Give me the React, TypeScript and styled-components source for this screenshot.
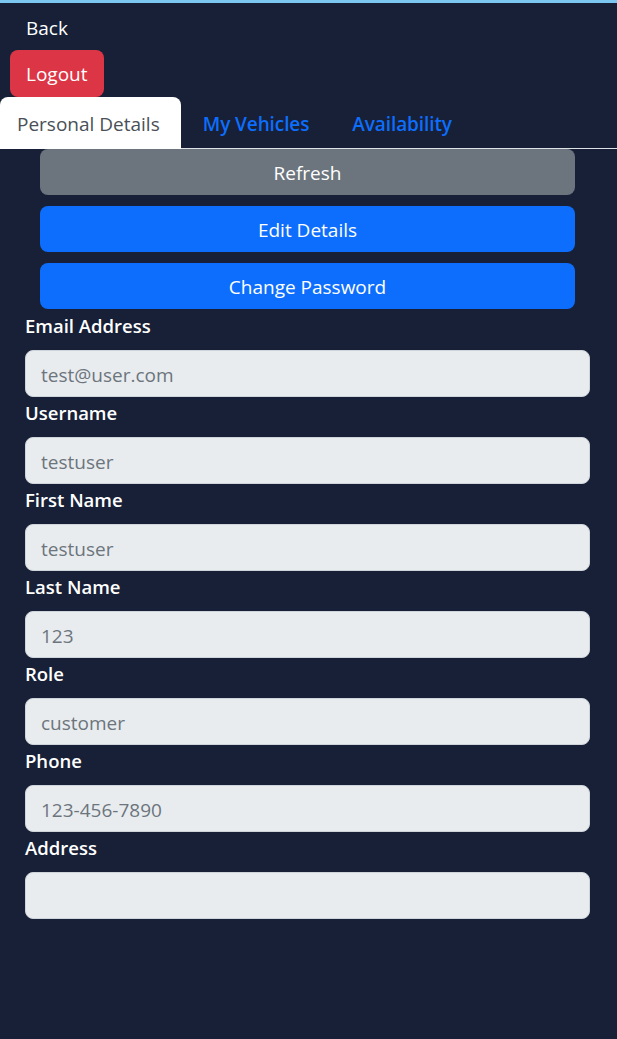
import React from 'react';
import styled, { createGlobalStyle } from 'styled-components';

const GlobalStyle = createGlobalStyle`
  * { box-sizing: border-box; }
  html, body {
    margin: 0;
    padding: 0;
    background: #172036;
  }
  body {
    font-family: "Open Sans", "Noto Sans", sans-serif;
  }
`;

interface Field {
  label: string;
  value: string;
}

const fields: Field[] = [
  { label: 'Email Address', value: 'test@user.com' },
  { label: 'Username', value: 'testuser' },
  { label: 'First Name', value: 'testuser' },
  { label: 'Last Name', value: '123' },
  { label: 'Role', value: 'customer' },
  { label: 'Phone', value: '123-456-7890' },
  { label: 'Address', value: '' },
];

const tabs = ['Personal Details', 'My Vehicles', 'Availability'];

function App() {
  return (
    <>
      <GlobalStyle />
      <Page>
        <TopActions>
          <BackButton type="button">Back</BackButton>
          <LogoutButton type="button">Logout</LogoutButton>
        </TopActions>
        <TabBar>
          {tabs.map((tab, i) => (
            <Tab key={tab} $active={i === 0}>
              {tab}
            </Tab>
          ))}
        </TabBar>
        <ActionStack>
          <ActionButton $variant="secondary">Refresh</ActionButton>
          <ActionButton $variant="primary">Edit Details</ActionButton>
          <ActionButton $variant="primary">Change Password</ActionButton>
        </ActionStack>
        <Form>
          {fields.map((f) => (
            <FormGroup key={f.label}>
              <Label>{f.label}</Label>
              <Input disabled value={f.value} readOnly />
            </FormGroup>
          ))}
        </Form>
      </Page>
    </>
  );
}

export default App;

const Page = styled.div`
  min-height: 100vh;
  background: #172036;
  border-top: 3px solid #7cc7f2;
  display: flex;
  flex-direction: column;
`;

const TopActions = styled.div`
  display: flex;
  flex-direction: column;
  align-items: flex-start;
  padding-left: 10px;
`;

const BaseButton = styled.button`
  font-family: inherit;
  font-size: 19px;
  line-height: 29px;
  padding: 9px 16px;
  border: none;
  border-radius: 8px;
  cursor: pointer;
`;

const BackButton = styled(BaseButton)`
  background: transparent;
  color: #ffffff;
  height: 47px;
  padding: 11px 16px 7px;
`;

const LogoutButton = styled(BaseButton)`
  background: #dc3545;
  color: #ffffff;
  height: 47px;
  padding: 10px 16px 8px;
`;

const TabBar = styled.nav`
  display: flex;
  align-items: flex-end;
  height: 52px;
  border-bottom: 1px solid #dee2e6;
`;

const Tab = styled.a<{ $active?: boolean }>`
  display: flex;
  align-items: center;
  height: 52px;
  margin-bottom: -1px;
  padding: 2px 21px 0 17px;
  font-size: 19px;
  font-weight: ${(p) => (p.$active ? 500 : 600)};
  color: ${(p) => (p.$active ? '#495057' : '#0d6efd')};
  background: ${(p) => (p.$active ? '#ffffff' : 'transparent')};
  border-radius: 8px 8px 0 0;
  cursor: pointer;
  white-space: nowrap;
  & + & {
    padding-left: 22px;
    letter-spacing: -0.1px;
  }
`;

const ActionStack = styled.div`
  display: flex;
  flex-direction: column;
  gap: 11px;
  padding: 0 42px 1px 40px;
`;

const ActionButton = styled(BaseButton)<{ $variant: 'primary' | 'secondary' }>`
  width: 100%;
  height: 46px;
  padding: 2px 16px 0;
  color: #ffffff;
  background: ${(p) => (p.$variant === 'primary' ? '#0d6efd' : '#6c757d')};
`;

const Form = styled.div`
  display: flex;
  flex-direction: column;
  padding: 0 27px 0 25px;
`;

const FormGroup = styled.div`
  display: flex;
  flex-direction: column;
`;

const Label = styled.label`
  color: #ffffff;
  font-size: 18.5px;
  font-weight: 600;
  line-height: 30px;
  padding-top: 1px;
  margin-bottom: 9px;
`;

const Input = styled.input`
  width: 100%;
  height: 47px;
  padding: 2px 15px 0;
  font-family: inherit;
  font-size: 19px;
  color: #6c757d;
  background: #e9ecef;
  border: 1px solid #ced4da;
  border-radius: 8px;
  opacity: 1;
  -webkit-text-fill-color: #6c757d;
  outline: none;
`;
